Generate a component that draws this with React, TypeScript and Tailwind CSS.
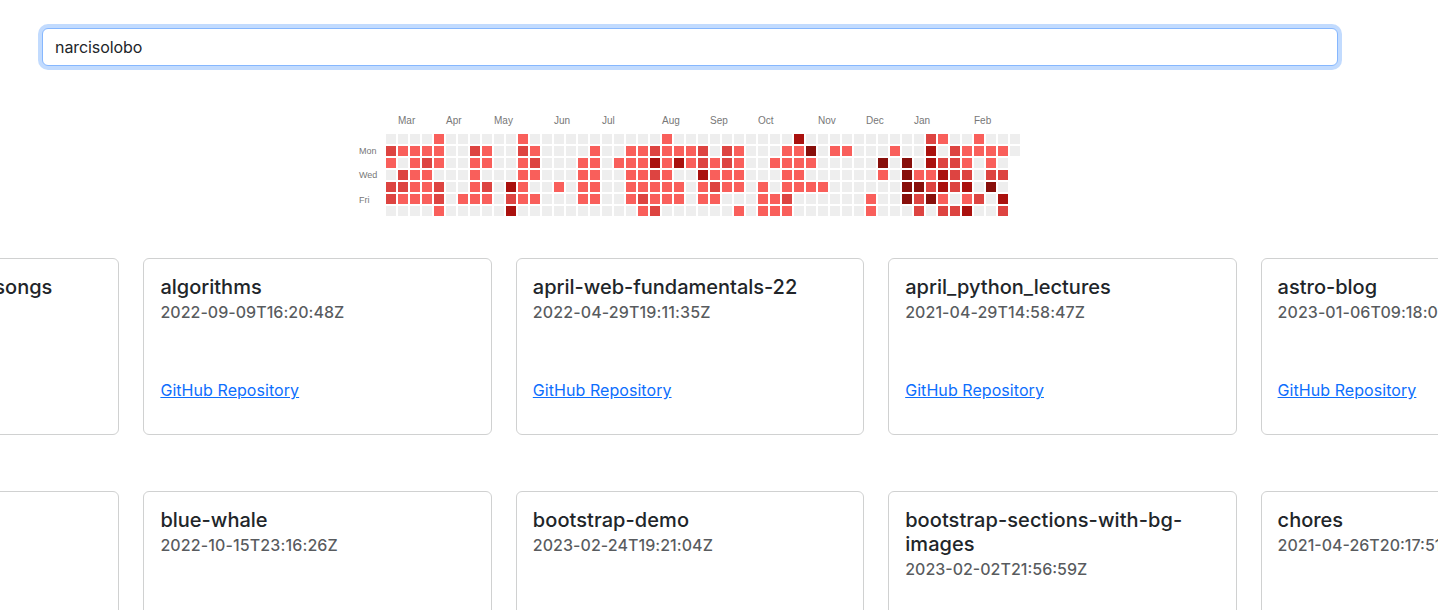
import React from "react";

const LEVELS = [
  "bg-[#eeeeee]",
  "bg-[#f95f5b]",
  "bg-[#dd4441]",
  "bg-[#aa110e]",
  "bg-[#880f0b]",
];

// One string per week, Sunday first; each digit is an activity level.
const WEEKS = [
  "0210220", "0102210", "0111110", "0121110", "1110221", "0000000", "0000010",
  "0211110", "0110210", "0000000", "0000323", "1211110", "0121010", "0000000",
  "0000100", "0000000", "0011110", "0111110", "0000000", "0010000", "0111110",
  "0111121", "0232112", "1111110", "0130110", "0110000", "0223110", "0011210",
  "0221100", "0111101", "0000000", "0000111", "0010011", "0111121", "3111100",
  "0410100", "0000100", "0100000", "0100000", "0000000", "0000011", "0041000",
  "0100000", "0044440", "0001422", "2331240", "1023312", "0222202", "0112313",
  "1100020", "0112400", "0102032", "00",
];

const MONTHS: Record<number, string> = {
  1: "Mar", 5: "Apr", 9: "May", 14: "Jun", 18: "Jul", 23: "Aug",
  27: "Sep", 31: "Oct", 36: "Nov", 40: "Dec", 44: "Jan", 49: "Feb",
};

const DAYS = ["", "Mon", "", "Wed", "", "Fri", ""];

function Calendar() {
  return (
    <div className="ml-[359px] mt-[44px] flex h-[106px] font-['Liberation_Sans',sans-serif] text-[#777777]">
      <div className="flex w-[27px] flex-col gap-[2px] pt-[24px] text-[9px] leading-[10px]">
        {DAYS.map((day, i) => (
          <span key={i} className={`h-[10px] ${day === "Fri" ? "pt-[1px]" : ""}`}>{day}</span>
        ))}
      </div>
      <div className="flex gap-[2px]">
        {WEEKS.map((week, i) => (
          <div key={i} className="flex w-[10px] flex-col gap-[2px]">
            <span className="h-[22px] pt-[5px] text-[10px] leading-[12px]">{MONTHS[i]}</span>
            {week.split("").map((level, d) => (
              <div key={d} className={`h-[10px] w-[10px] shrink-0 ${LEVELS[Number(level)]}`} />
            ))}
          </div>
        ))}
      </div>
    </div>
  );
}

type Repo = {
  name: string;
  date?: string;
  link?: boolean;
  tail?: boolean;
  nameTracking?: string;
  dateTracking?: string;
};

const ROWS: Repo[][] = [
  [
    { name: "songs", tail: true },
    { name: "algorithms", date: "2022-09-09T16:20:48Z", link: true, dateTracking: "tracking-[0.03px]" },
    { name: "april-web-fundamentals-22", date: "2022-04-29T19:11:35Z", link: true, nameTracking: "tracking-[-0.02px]", dateTracking: "tracking-[0.12px]" },
    { name: "april_python_lectures", date: "2021-04-29T14:58:47Z", link: true, dateTracking: "tracking-[0.05px]" },
    { name: "astro-blog", date: "2023-01-06T09:18:01Z", link: true, dateTracking: "tracking-[0.06px]" },
  ],
  [
    { name: "" },
    { name: "blue-whale", date: "2022-10-15T23:16:26Z", dateTracking: "tracking-[0.12px]" },
    { name: "bootstrap-demo", date: "2023-02-24T19:21:04Z", nameTracking: "tracking-[0.07px]", dateTracking: "tracking-[0.05px]" },
    { name: "bootstrap-sections-with-bg-images", date: "2023-02-02T21:56:59Z", nameTracking: "tracking-[0.07px]" },
    { name: "chores", date: "2021-04-26T20:17:51Z" },
  ],
];

function Card({ repo }: { repo: Repo }) {
  return (
    <article className="flex h-[177px] flex-col rounded-[6px] border border-[#d0d1d1] bg-white p-4">
      <h5
        className={`text-[20px] font-medium leading-6 ${repo.nameTracking ?? ""} ${repo.tail ? "pr-[50px] text-right" : ""}`}
      >
        {repo.name}
      </h5>
      {repo.date && (
        <h6 className={`mt-1 text-[16px] font-medium leading-[19.2px] text-[#212529]/75 ${repo.dateTracking ?? ""}`}>
          {repo.date}
        </h6>
      )}
      {repo.link && (
        <a
          href="#"
          className="mb-4 mt-auto self-start text-[16px] leading-6 tracking-[0.06px] text-[#0d6efd] underline"
        >
          GitHub Repository
        </a>
      )}
    </article>
  );
}

export default function App() {
  return (
    <div className="h-[610px] w-[1438px] overflow-hidden bg-white pt-7 font-[Inter,sans-serif] text-[#212529]">
      <input
        type="text"
        defaultValue="narcisolobo"
        className="ml-[42px] block h-[38px] w-[1296px] rounded-[6px] border border-[#86b7fe] bg-white px-3 py-1.5 text-[16px] leading-6 tracking-[-0.07px] outline-none ring-4 ring-[#0d6efd]/25"
      />
      <Calendar />
      <main className="-ml-[229px] mt-[42px] flex w-[1838px] flex-col gap-[56px]">
        {ROWS.map((row, i) => (
          <div key={i} className="grid grid-cols-5 gap-6">
            {row.map((repo, j) => (
              <Card key={j} repo={repo} />
            ))}
          </div>
        ))}
      </main>
    </div>
  );
}
